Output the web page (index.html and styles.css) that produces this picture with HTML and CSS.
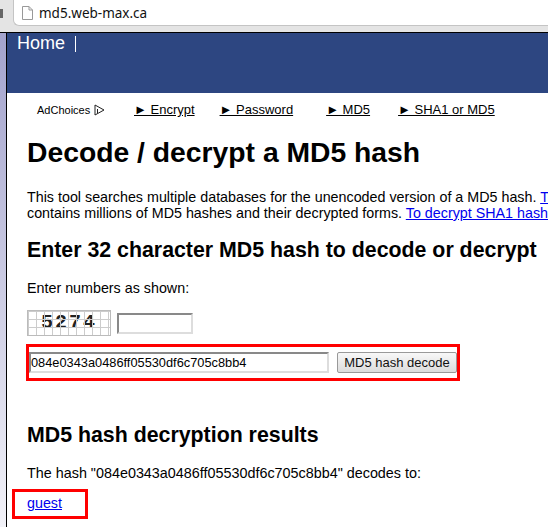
FILE: index.html
```html
<!DOCTYPE html>
<html lang="en">
<head>
    <meta charset="UTF-8">
    <title>md5.web-max.ca</title>
    <link rel="stylesheet" href="styles.css">
</head>
<body>

    <div class="toolbar">
        <div class="back-edge"><div class="back-arrow"></div></div>
        <div class="url-box">
            <svg class="page-icon" width="13" height="16" viewBox="0 0 13 16">
                <path d="M1.500 1.500h6.500l3.500 3.500v9.500h-10z M8 1.500v3.500h3.500" fill="#fff" stroke="#999" stroke-width="1"/>
            </svg>
            <span>md5.web-max.ca</span>
        </div>
    </div>

    <div class="window">
        <div class="gutter"></div>
        <div class="page">
            <div class="banner">
                <a class="home-link" href="#">Home</a>
            </div>

            <div class="nav">
                <span class="adchoices">AdChoices
                    <svg width="11" height="12" viewBox="0 0 11 12">
                        <path d="M1 1l9 5-9 5z M3.500 5v4" fill="none" stroke="#222" stroke-width="1"/>
                    </svg>
                </span>
                <a class="nav-encrypt" href="#">► Encrypt</a>
                <a class="nav-password" href="#">► Password</a>
                <a class="nav-md5" href="#">► MD5</a>
                <a href="#">► SHA1 or MD5</a>
            </div>

            <div class="content">
                <h1>Decode / decrypt a MD5 hash</h1>

                <p class="intro">This tool searches multiple databases for the unencoded version of a MD5 hash. <a href="#">The database</a><br>
                contains millions of MD5 hashes and their decrypted forms. <a href="#">To decrypt SHA1 hashes click here</a></p>

                <h2>Enter 32 character MD5 hash to decode or decrypt</h2>

                <p class="shown">Enter numbers as shown:</p>

                <div class="captcha-row">
                    <div class="captcha"><span>5274</span></div>
                    <input class="captcha-input" type="text">
                </div>

                <form class="hash-form">
                    <input class="hash-input" type="text" value="084e0343a0486ff05530df6c705c8bb4">
                    <button type="button">MD5 hash decode</button>
                </form>

                <h3>MD5 hash decryption results</h3>

                <p class="decodes">The hash "084e0343a0486ff05530df6c705c8bb4" decodes to:</p>

                <div class="answer"><a href="#">guest</a></div>
            </div>
        </div>
    </div>

</body>
</html>
```

FILE: styles.css
```css
/* General Styles */
html, body {
    height: 100%;
}

body {
    margin: 0;
    font-family: 'Liberation Sans', Arial, sans-serif;
    background-color: #fff;
    color: #000;
    overflow: hidden;
}

/* Browser toolbar */
.toolbar {
    display: flex;
    height: 33px;
    box-sizing: border-box;
    background-color: #e4e4e4;
    border-bottom: 1px solid #000;
}

.back-edge {
    width: 13px;
    padding-top: 9px;
    box-sizing: border-box;
}

.back-arrow {
    width: 3px;
    height: 9px;
    background-color: #666;
}

.url-box {
    flex: 1;
    display: flex;
    align-items: center;
    gap: 5px;
    height: 26px;
    box-sizing: border-box;
    padding-left: 7px;
    background-color: #fff;
    border: 1px solid #c4c4c4;
    border-top: none;
    border-right: none;
    border-radius: 0 0 0 6px;
    font-family: 'Noto Sans', sans-serif;
    font-size: 13.5px;
    color: #111;
}

/* Page */
.window {
    display: flex;
    height: 494px;
}

.gutter {
    width: 6px;
    background: linear-gradient(#a3a3cd, #f2f2f8);
}

.page {
    flex: 1;
    min-width: 0;
    border-left: 1px solid #000;
    overflow: hidden;
}

.banner {
    height: 60px;
    background-color: #2d4681;
    padding-left: 10px;
}

.home-link {
    display: inline-block;
    height: 16px;
    margin-top: 3px;
    padding-right: 10px;
    border-right: 1px solid #fff;
    font-size: 18px;
    line-height: 15px;
    color: #fff;
    text-decoration: none;
}

.nav {
    display: flex;
    align-items: center;
    height: 19px;
    margin-top: 7px;
    padding-left: 30px;
    font-size: 13px;
    white-space: nowrap;
}

.nav a {
    color: #000;
}

.adchoices {
    display: flex;
    align-items: center;
    gap: 4px;
    width: 97px;
    font-size: 11px;
}

.nav-encrypt {
    margin-right: 25px;
}

.nav-password {
    margin-right: 33px;
}

.nav-md5 {
    margin-right: 28px;
}

.content {
    padding-left: 20px;
    white-space: nowrap;
}

h1 {
    margin: 16px 0 0;
    font-size: 28.3px;
    line-height: 34px;
}

.intro {
    margin: 20px 0 0;
    font-size: 14.3px;
    line-height: 16px;
}

h2 {
    margin: 17px 0 0;
    font-size: 21.33px;
    line-height: 24px;
}

.shown {
    margin: 18px 0 0;
    font-size: 14.3px;
    line-height: 16px;
}

.captcha-row {
    display: flex;
    align-items: center;
    gap: 6px;
    margin-top: 14px;
}

/* grid lies over the digits, as in the generated image */
.captcha {
    position: relative;
    width: 84px;
    height: 26px;
    box-sizing: border-box;
    border: 1px solid #bbb;
    text-align: center;
    font-family: 'Liberation Mono', monospace;
    font-size: 20px;
    font-weight: bold;
    line-height: 24px;
    letter-spacing: 2px;
    color: #222;
}

.captcha::after {
    content: "";
    position: absolute;
    top: 0;
    right: 0;
    bottom: 0;
    left: 0;
    background-image:
        linear-gradient(to right, #ccc 1px, transparent 1px),
        linear-gradient(to bottom, #ccc 1px, transparent 1px);
    background-size: 8px 8px;
}

.captcha-input {
    width: 76px;
    height: 21px;
    box-sizing: border-box;
    margin: 0;
    border: 2px inset #ddd;
}

.hash-form {
    display: flex;
    align-items: center;
    gap: 8px;
    width: 428px;
    height: 31px;
    margin-top: 8px;
    margin-left: -1px;
    border: 3px solid #f00;
}

.hash-input {
    width: 300px;
    height: 21px;
    box-sizing: border-box;
    margin: 0;
    padding: 0;
    border: 2px inset #ddd;
    font-family: 'Liberation Sans', Arial, sans-serif;
    font-size: 12.8px;
}

button {
    width: 120px;
    height: 21px;
    padding: 0;
    background: linear-gradient(#f8f8f8, #dcdcdc);
    border: 1px solid #999;
    border-radius: 2px;
    font-family: 'Liberation Sans', Arial, sans-serif;
    font-size: 13px;
    color: #111;
}

h3 {
    margin: 42px 0 0;
    font-size: 21.33px;
    line-height: 24px;
}

.decodes {
    margin: 18px 0 0;
    font-size: 14.36px;
    line-height: 16px;
}

.answer {
    width: 58px;
    height: 24px;
    margin: 8px 0 0 -15px;
    padding-left: 12px;
    border: 3px solid #f00;
    font-size: 14.3px;
    line-height: 22px;
}

.answer a {
    color: #00e;
}
```
